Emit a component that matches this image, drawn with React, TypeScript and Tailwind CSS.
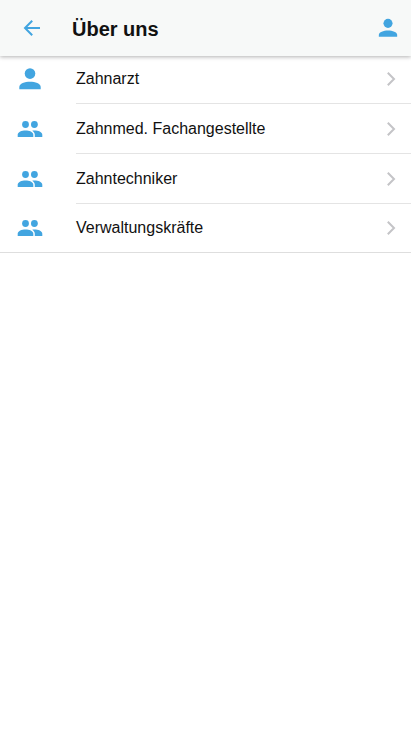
type IconProps = { className?: string };

const ArrowBackIcon = ({ className }: IconProps) => (
  <svg viewBox="0 0 24 24" className={className} fill="none" stroke="currentColor" strokeWidth="2" aria-hidden="true">
    <path d="M20 12H5.5M12.2 4.7 5 12l7.2 7.3" />
  </svg>
);

const PersonIcon = ({ className }: IconProps) => (
  <svg viewBox="0 0 28 28" className={className} fill="currentColor" aria-hidden="true">
    <circle cx="14" cy="8.6" r="5.3" />
    <path d="M3.3 24.3v-2.2c0-3.5 5.5-5.3 10.7-5.3s10.7 1.8 10.7 5.3v2.2z" />
  </svg>
);

const PeopleIcon = ({ className }: IconProps) => (
  <svg viewBox="0 0 28 28" className={className} fill="currentColor" aria-hidden="true">
    <circle cx="9.5" cy="9.5" r="3.4" />
    <circle cx="18.4" cy="9.5" r="3.4" />
    <path d="M1.7 22v-2.2c0-2.7 4-4.2 7.8-4.2s7.8 1.5 7.8 4.2V22z" />
    <path d="M16.2 15.8c.7-.1 1.4-.2 2.2-.2 3.8 0 7.9 1.5 7.9 4.2V22h-7.5v-2.2c0-1.8-1.1-3.1-2.6-4z" />
  </svg>
);

const ChevronIcon = ({ className }: IconProps) => (
  <svg viewBox="0 0 10 16" className={className} fill="none" stroke="currentColor" strokeWidth="2" aria-hidden="true">
    <path d="M1.8 1.8 8 8l-6.2 6.2" />
  </svg>
);

const entries = [
  { label: 'Zahnarzt', icon: PersonIcon },
  { label: 'Zahnmed. Fachangestellte', icon: PeopleIcon },
  { label: 'Zahntechniker', icon: PeopleIcon },
  { label: 'Verwaltungskräfte', icon: PeopleIcon },
];

const Header = () => (
  <header className="relative flex h-14 items-center bg-[#f7f9f8] pl-5 pr-[11px] shadow-[0_1px_4px_rgba(0,0,0,0.3)]">
    <button type="button" aria-label="Zurück" className="text-[#42a5e0]">
      <ArrowBackIcon className="size-6" />
    </button>
    <h1 className="ml-7 flex-1 pt-0.5 text-xl font-bold text-[#111]">Über uns</h1>
    <button type="button" aria-label="Profil" className="text-[#42a5e0]">
      <PersonIcon className="size-6" />
    </button>
  </header>
);

export default function App() {
  return (
    <div className="min-h-screen bg-white font-['Liberation_Sans',Arial,sans-serif] text-[#111]">
      <Header />
      <nav className="-mt-0.5">
        <ul className="border-b border-[#dedede]">
          {entries.map(({ label, icon: Icon }, i) => (
            <li key={label}>
              <a href="#" className="flex items-center pl-4">
                <Icon className="size-7 text-[#42a5e0]" />
                <span
                  className={`ml-8 flex flex-1 items-center justify-between pr-[15px] ${
                    i < entries.length - 1 ? 'h-[50px] border-b border-[#e4e4e4]' : 'h-12'
                  }`}
                >
                  <span className="text-base">{label}</span>
                  <ChevronIcon className="h-4 w-[10px] text-[#c4c4c7]" />
                </span>
              </a>
            </li>
          ))}
        </ul>
      </nav>
    </div>
  );
}
